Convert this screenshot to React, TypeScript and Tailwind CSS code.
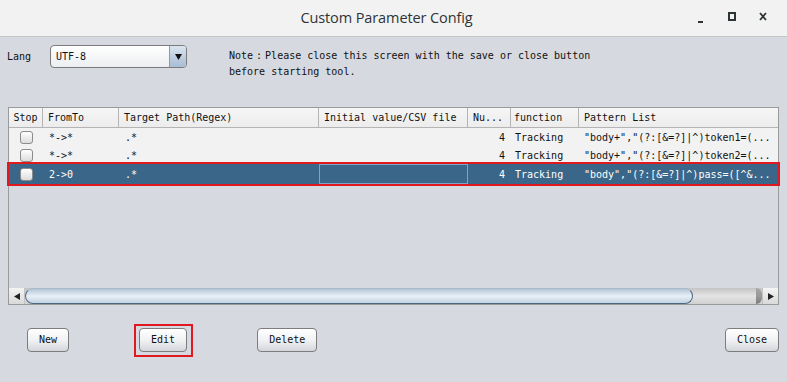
import React from "react";

const mono = "font-['DejaVu_Sans_Mono','Noto_Sans_CJK_TC',monospace]";

function Check() {
  return (
    <div className="w-[13px] h-[13px] rounded-[3px] border border-[#8c8c8c] bg-gradient-to-b from-[#ffffff] to-[#dcdcdc]" />
  );
}

const cols = [34, 76, 200, 149, 43, 68, 199];

type Row = { from: string; path: string; num: string; fn: string; pat: string; sel?: boolean };
const rows: Row[] = [
  { from: "*->*", path: ".*", num: "4", fn: "Tracking", pat: '"body+","(?:[&=?]|^)token1=(...' },
  { from: "*->*", path: ".*", num: "4", fn: "Tracking", pat: '"body+","(?:[&=?]|^)token2=(...' },
  { from: "2->0", path: ".*", num: "4", fn: "Tracking", pat: '"body","(?:[&=?]|^)pass=([^&...', sel: true },
];

function Btn({ label, boxed }: { label: string; boxed?: boolean }) {
  return (
    <button className="relative h-[24px] px-[11px] rounded-[4px] border border-[#7d7d7d] bg-gradient-to-b from-[#ffffff] via-[#f1f2f4] to-[#d3d6dc] text-[10px] text-[#111] leading-none">
      {label}
      {boxed && (
        <span className="absolute left-[-6px] right-[-7px] top-[-5px] bottom-[-6px] border-[2px] border-[#e0191e] pointer-events-none" />
      )}
    </button>
  );
}

export default function App() {
  return (
    <div className={`w-[787px] h-[382px] bg-[#d6d9df] flex flex-col ${mono} text-[10px] text-[#111]`}>
      {/* title bar */}
      <div className="h-[37px] shrink-0 flex items-center bg-[#f2f2f2] border-b border-[#c6c6c6]">
        <div className="flex-1" />
        <div className="font-['Open_Sans',sans-serif] text-[14.5px] font-medium text-[#2e3436] tracking-[-0.1px]">
          Custom Parameter Config
        </div>
        <div className="flex-1 flex justify-end items-center pr-[14px]">
          <svg width="30" height="20" viewBox="0 0 30 20">
            <rect x="9" y="13" width="5" height="2" fill="#2e3436" />
          </svg>
          <svg width="30" height="20" viewBox="0 0 30 20">
            <rect x="10" y="5" width="6" height="7" fill="none" stroke="#2e3436" strokeWidth="2" />
          </svg>
          <svg width="24" height="20" viewBox="0 0 24 20">
            <path d="M11 5 L17 12 M17 5 L11 12" stroke="#2e3436" strokeWidth="1.8" />
          </svg>
        </div>
      </div>

      {/* top controls */}
      <div className="flex items-start mt-[8px] h-[40px]">
        <div className="ml-[7px] h-[23px] flex items-center w-[43px]">Lang</div>
        <div className="w-[137px] h-[23px] rounded-[4px] border border-[#7b7b7b] bg-gradient-to-b from-[#ffffff] to-[#eceef1] flex overflow-hidden">
          <div className="flex-1 flex items-center pl-[5px]">UTF-8</div>
          <div className="w-[17px] border-l border-[#8a9bb0] bg-gradient-to-b from-[#dbe5f0] via-[#bfcfe1] to-[#a8bdd4] flex items-center justify-center">
            <svg width="7" height="6" viewBox="0 0 7 6">
              <path d="M0 0 H7 L3.5 6 Z" fill="#111" />
            </svg>
          </div>
        </div>
        <div className="ml-[42px] mt-[3px] leading-[16px]">
          <div className="whitespace-pre">
            Note<span className="inline-block w-[12px] text-center">:</span>Please close this screen with the save or close button
          </div>
          <div>before starting tool.</div>
        </div>
      </div>

      {/* table */}
      <div className="mt-[22px] mx-[8px] h-[198px] border border-[#9a9a9a] flex flex-col">
        <div className="h-[20px] flex bg-gradient-to-b from-[#f6f6f6] to-[#ececec] border-b border-[#b4b4b4]">
          {["Stop", "FromTo", "Target Path(Regex)", "Initial value/CSV file", "Nu...", "function", "Pattern List"].map((h, i) => (
            <div
              key={h}
              style={{ width: cols[i] }}
              className={`shrink-0 flex items-center border-r border-[#b4b4b4] last:border-r-0 ${i === 0 ? "justify-center" : i === 5 ? "pl-[3px]" : "pl-[5px]"}`}
            >
              {h}
            </div>
          ))}
        </div>
        <div className="flex flex-col">
          {rows.map((r, idx) => (
            <div
              key={idx}
              className={`flex ${r.sel ? "h-[20px] bg-[#3a6789] text-white outline-2 outline-[#e0191e]" : "h-[18px] bg-[#f2f2f2]"}`}
            >
              <div style={{ width: cols[0] }} className="shrink-0 flex items-center justify-center">
                <Check />
              </div>
              <div style={{ width: cols[1] }} className="shrink-0 flex items-center pl-[6px]">{r.from}</div>
              <div style={{ width: cols[2] }} className="shrink-0 flex items-center pl-[6px]">{r.path}</div>
              <div
                style={{ width: cols[3] }}
                className={`shrink-0 flex items-center ${r.sel ? "border border-[#7ea4c8]" : ""}`}
              />
              <div style={{ width: cols[4] }} className="shrink-0 flex items-center justify-end pr-[6px]">{r.num}</div>
              <div style={{ width: cols[5] }} className="shrink-0 flex items-center pl-[4px]">{r.fn}</div>
              <div style={{ width: cols[6] }} className="shrink-0 flex items-center pl-[5px] whitespace-nowrap overflow-hidden">{r.pat}</div>
            </div>
          ))}
        </div>
        <div className="flex-1" />
        <div className="h-[16px] flex">
          <div className="w-[16px] bg-gradient-to-b from-[#f4f4f4] to-[#d9d9d9] border-r border-[#c2c2c2] flex items-center justify-center">
            <svg width="6" height="7" viewBox="0 0 6 7"><path d="M6 0 V7 L0 3.5 Z" fill="#222" /></svg>
          </div>
          <div className="flex-1 flex bg-gradient-to-b from-[#c4c4c4] via-[#e4e4e4] to-[#d0d0d0]">
            <div className="w-[668px] rounded-[8px] border border-[#4d6680] border-t-[#a9b9c9] bg-gradient-to-b from-[#b4c6d8] via-[#e8f0f7] to-[#c2d3e3]" />
            <div className="flex-1 flex justify-end">
              <div className="w-[6px] h-full rounded-r-[6px] bg-gradient-to-b from-[#9a9a9a] to-[#5a5a5a] opacity-70" />
            </div>
          </div>
          <div className="w-[16px] bg-gradient-to-b from-[#f4f4f4] to-[#d9d9d9] border-l border-[#c2c2c2] flex items-center justify-center">
            <svg width="6" height="7" viewBox="0 0 6 7"><path d="M0 0 V7 L6 3.5 Z" fill="#222" /></svg>
          </div>
        </div>
      </div>

      {/* buttons */}
      <div className="mt-[23px] flex items-center pl-[27px] pr-[8px]">
        <Btn label="New" />
        <div className="ml-[70px]"><Btn label="Edit" boxed /></div>
        <div className="ml-[70px]"><Btn label="Delete" /></div>
        <div className="ml-auto"><Btn label="Close" /></div>
      </div>
    </div>
  );
}
